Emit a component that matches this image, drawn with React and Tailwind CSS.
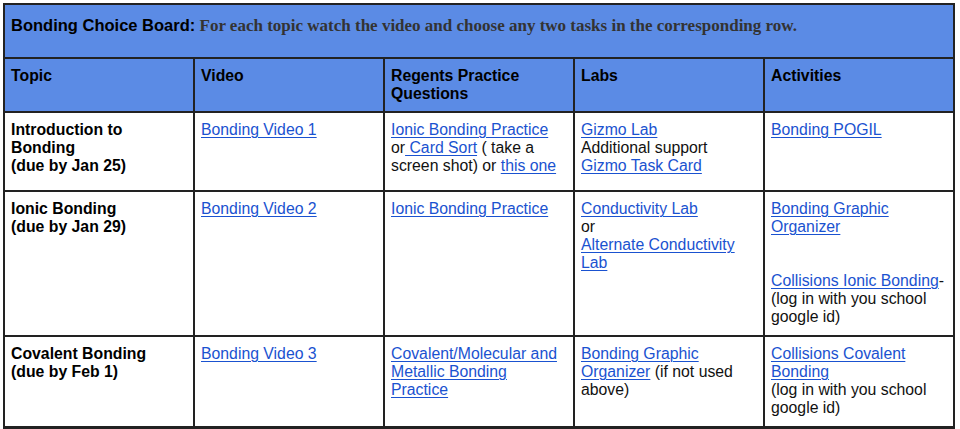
import React from 'react';

const A = ({ children }) => (
  <a href="#" className="text-[#1a52d0] underline underline-offset-2 decoration-1">
    {children}
  </a>
);

const cell = 'border-2 border-[#222] align-top px-[6px] pt-[8px]';
const head = 'border-2 border-[#222] align-top px-[6px] pt-[8px] font-bold text-black bg-[#5b8be5]';

const rows = [
  {
    topic: (
      <>
        Introduction to
        <br />
        Bonding
        <br />
        (due by Jan 25)
      </>
    ),
    video: <A>Bonding Video 1</A>,
    regents: (
      <>
        <A>Ionic Bonding Practice</A>
        <br />
        or<A> Card Sort</A> ( take a screen shot) or <A>this one</A>
      </>
    ),
    labs: (
      <>
        <A>Gizmo Lab</A>
        <br />
        Additional support
        <br />
        <A>Gizmo Task Card</A>
      </>
    ),
    activities: <A>Bonding POGIL</A>,
    h: 'h-[79px]',
  },
  {
    topic: (
      <>
        Ionic Bonding
        <br />
        (due by Jan 29)
      </>
    ),
    video: <A>Bonding Video 2</A>,
    regents: <A>Ionic Bonding Practice</A>,
    labs: (
      <>
        <A>Conductivity Lab</A>
        <br />
        or
        <br />
        <A>Alternate Conductivity Lab</A>
      </>
    ),
    activities: (
      <>
        <A>Bonding Graphic Organizer</A>
        <br />
        <br />
        <br />
        <A>Collisions Ionic Bonding</A>- (log in with you school google id)
      </>
    ),
    h: 'h-[145px]',
  },
  {
    topic: (
      <>
        Covalent Bonding
        <br />
        (due by Feb 1)
      </>
    ),
    video: <A>Bonding Video 3</A>,
    regents: <A>Covalent/Molecular and Metallic Bonding Practice</A>,
    labs: (
      <>
        <A>Bonding Graphic Organizer</A> (if not used above)
      </>
    ),
    activities: (
      <>
        <A>Collisions Covalent Bonding</A>
        <br />
        (log in with you school google id)
      </>
    ),
    h: 'h-[91px]',
  },
];

export default function App() {
  return (
    <div className="w-[960px] h-[429px] bg-white pt-[3px] pl-[3px] overflow-hidden font-['Liberation_Sans',Arial,sans-serif] text-[15.8px] leading-[18px] text-[#111]">
      <table className="border-collapse table-fixed w-[950px] border-b-[3px] border-b-[#222]">
        <colgroup>
          <col className="w-[190px]" />
          <col className="w-[190px]" />
          <col className="w-[190px]" />
          <col className="w-[190px]" />
          <col className="w-[190px]" />
        </colgroup>
        <tbody>
          <tr className="h-[54px]">
            <td colSpan={5} className="border-2 border-[#222] align-top px-[6px] pt-[11px] bg-[#5b8be5]">
              <span className="font-bold text-black text-[16.5px]">Bonding Choice Board:</span>
              <span className="font-bold text-[#333] font-['Liberation_Serif','Times_New_Roman',serif] text-[17px]">
                {' '}For each topic watch the video and choose any two tasks in the corresponding row.
              </span>
            </td>
          </tr>
          <tr className="h-[54px]">
            <td className={head}>Topic</td>
            <td className={head}>Video</td>
            <td className={head}>
              Regents Practice
              <br />
              Questions
            </td>
            <td className={head}>Labs</td>
            <td className={head}>Activities</td>
          </tr>
          {rows.map((r, i) => (
            <tr key={i} className={r.h}>
              <td className={`${cell} font-bold text-black`}>{r.topic}</td>
              <td className={cell}>{r.video}</td>
              <td className={cell}>{r.regents}</td>
              <td className={cell}>{r.labs}</td>
              <td className={cell}>{r.activities}</td>
            </tr>
          ))}
        </tbody>
      </table>
      <div className="w-[950px] h-[2px] bg-[#8fb0ee]" />
    </div>
  );
}
